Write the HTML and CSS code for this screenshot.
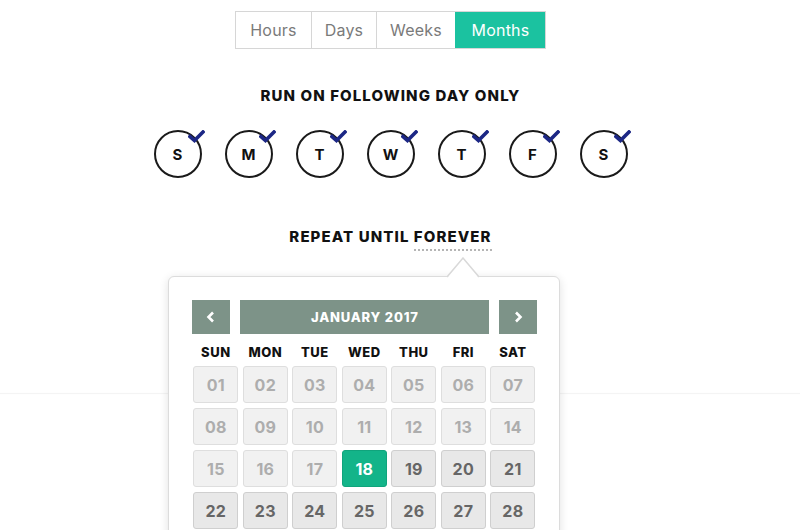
FILE: index.html
```html
<!DOCTYPE html>
<html>
<head>
<meta charset="utf-8">
<link rel="stylesheet" href="styles.css">
</head>
<body>
<div class="page">
  <div class="seg">
    <span class="seg-item w-hours">Hours</span>
    <span class="seg-item w-days">Days</span>
    <span class="seg-item w-weeks">Weeks</span>
    <span class="seg-item w-months active">Months</span>
  </div>

  <h2 class="title">RUN ON FOLLOWING DAY ONLY</h2>

  <div class="days">
    <div class="day">S<svg class="check" viewBox="0 0 17 13"><polyline points="2,6.5 6.5,10.5 15,2"/></svg></div>
    <div class="day">M<svg class="check" viewBox="0 0 17 13"><polyline points="2,6.5 6.5,10.5 15,2"/></svg></div>
    <div class="day">T<svg class="check" viewBox="0 0 17 13"><polyline points="2,6.5 6.5,10.5 15,2"/></svg></div>
    <div class="day">W<svg class="check" viewBox="0 0 17 13"><polyline points="2,6.5 6.5,10.5 15,2"/></svg></div>
    <div class="day">T<svg class="check" viewBox="0 0 17 13"><polyline points="2,6.5 6.5,10.5 15,2"/></svg></div>
    <div class="day">F<svg class="check" viewBox="0 0 17 13"><polyline points="2,6.5 6.5,10.5 15,2"/></svg></div>
    <div class="day">S<svg class="check" viewBox="0 0 17 13"><polyline points="2,6.5 6.5,10.5 15,2"/></svg></div>
  </div>

  <div class="repeat">
    <span class="repeat-text">REPEAT UNTIL <span class="until">FOREVER</span></span>
    <div class="popover">
      <svg class="arrow" viewBox="0 0 32 21"><polygon points="0,21 16,1 32,21" fill="#fff"/><polyline points="0,20 16,1 32,20" fill="none" stroke="#d9d9d9" stroke-width="1.5"/></svg>
      <div class="cal-head">
        <button class="nav"><svg viewBox="0 0 10 12"><polyline points="7,1.5 2.5,6 7,10.5"/></svg></button>
        <div class="month">JANUARY 2017</div>
        <button class="nav"><svg viewBox="0 0 10 12"><polyline points="3,1.5 7.5,6 3,10.5"/></svg></button>
      </div>
      <div class="grid">
        <span class="dn">SUN</span><span class="dn">MON</span><span class="dn">TUE</span><span class="dn">WED</span><span class="dn">THU</span><span class="dn">FRI</span><span class="dn">SAT</span>
        <span class="cell off">01</span><span class="cell off">02</span><span class="cell off">03</span><span class="cell off">04</span><span class="cell off">05</span><span class="cell off">06</span><span class="cell off">07</span>
        <span class="cell off">08</span><span class="cell off">09</span><span class="cell off">10</span><span class="cell off">11</span><span class="cell off">12</span><span class="cell off">13</span><span class="cell off">14</span>
        <span class="cell off">15</span><span class="cell off">16</span><span class="cell off">17</span><span class="cell sel">18</span><span class="cell">19</span><span class="cell">20</span><span class="cell">21</span>
        <span class="cell">22</span><span class="cell">23</span><span class="cell">24</span><span class="cell">25</span><span class="cell">26</span><span class="cell">27</span><span class="cell">28</span>
      </div>
    </div>
  </div>

  <div class="divider"></div>
</div>
</body>
</html>
```
FILE: styles.css
```css
html, body {
  margin: 0;
  padding: 0;
  background: #fff;
  overflow: hidden;
  height: 530px;
}
body {
  font-family: "Inter", "Noto Sans", sans-serif;
  color: #111;
}
.page {
  width: 781px;
  display: flex;
  flex-direction: column;
  align-items: center;
  padding-top: 11px;
}
.seg {
  display: flex;
  height: 38px;
  border: 1px solid #d6d6d6;
  box-sizing: border-box;
}
.seg-item {
  display: flex;
  align-items: center;
  justify-content: center;
  font-size: 16px;
  color: #7a7a7a;
  border-left: 1px solid #d6d6d6;
  letter-spacing: 0.2px;
}
.seg-item:first-child { border-left: none; }
.w-hours { width: 75px; }
.w-days { width: 64px; }
.w-weeks { width: 78px; }
.w-months { width: 89px; }
.seg-item.active {
  background: #1bc2a0;
  color: #fff;
  border-left-color: #1bc2a0;
}
.title {
  margin: 38px 0 0;
  font-size: 15px;
  line-height: 18px;
  font-weight: 800;
  letter-spacing: 1.1px;
  color: #111;
}
.days {
  display: flex;
  gap: 23px;
  margin-top: 25px;
}
.day {
  position: relative;
  width: 48px;
  height: 48px;
  box-sizing: border-box;
  border: 2px solid #1a1a1a;
  border-radius: 50%;
  display: flex;
  align-items: center;
  justify-content: center;
  font-size: 15px;
  font-weight: 700;
  color: #111;
}
.check {
  position: absolute;
  left: 32px;
  top: -2px;
  width: 17px;
  height: 13px;
}
.check polyline {
  fill: none;
  stroke: #1c2785;
  stroke-width: 3.6;
  stroke-linecap: square;
}
.repeat {
  position: relative;
  margin-top: 50px;
  display: flex;
  justify-content: center;
}
.repeat-text {
  font-size: 15px;
  line-height: 18px;
  font-weight: 800;
  letter-spacing: 1.1px;
  color: #111;
}
.until {
  border-bottom: 2px dotted #b5b5b5;
  padding-bottom: 3px;
}
.divider {
  width: 800px;
  align-self: flex-start;
  height: 1px;
  margin-top: 147px;
  background: #f4f4f4;
  box-shadow: 0 0 3px rgba(0,0,0,0.03);
}
.popover {
  position: absolute;
  top: 48px;
  left: -121px;
  width: 392px;
  height: 300px;
  box-sizing: border-box;
  background: #fff;
  border: 1px solid #dcdcdc;
  border-radius: 6px;
  box-shadow: 0 2px 10px rgba(0,0,0,0.12);
  padding: 23px 22px 0 23px;
  z-index: 2;
}
.arrow {
  position: absolute;
  top: -20px;
  left: 278px;
  width: 32px;
  height: 21px;
}
.cal-head {
  display: flex;
  gap: 10px;
  height: 34px;
}
.nav {
  width: 38px;
  height: 34px;
  border: none;
  padding: 0;
  margin: 0;
  background: #7d9388;
  display: flex;
  align-items: center;
  justify-content: center;
}
.nav svg {
  width: 10px;
  height: 12px;
}
.nav polyline {
  fill: none;
  stroke: #fff;
  stroke-width: 2.6;
}
.month {
  flex: 1;
  background: #7d9388;
  color: #fff;
  font-size: 13px;
  font-weight: 800;
  display: flex;
  align-items: center;
  justify-content: center;
  letter-spacing: 0.8px;
}
.grid {
  display: grid;
  grid-template-columns: repeat(7, 45px);
  grid-template-rows: 27px;
  grid-auto-rows: 37px;
  column-gap: 4.5px;
  row-gap: 5px;
  margin-left: 1px;
}
.dn {
  font-size: 13px;
  font-weight: 800;
  color: #111;
  text-align: center;
  line-height: 16px;
  height: 16px;
  margin-top: 10px;
  letter-spacing: 0.5px;
}
.cell {
  display: flex;
  align-items: center;
  justify-content: center;
  box-sizing: border-box;
  border: 1.5px solid #cfcfcf;
  border-radius: 3px;
  background: #e8e8e8;
  color: #666;
  font-size: 16px;
  font-weight: 700;
  letter-spacing: 0.3px;
}
.cell.off {
  background: #f1f1f1;
  border-color: #dedede;
  color: #adadad;
}
.cell.sel {
  background: #13b489;
  border-color: #10a47c;
  color: #fff;
}
```
